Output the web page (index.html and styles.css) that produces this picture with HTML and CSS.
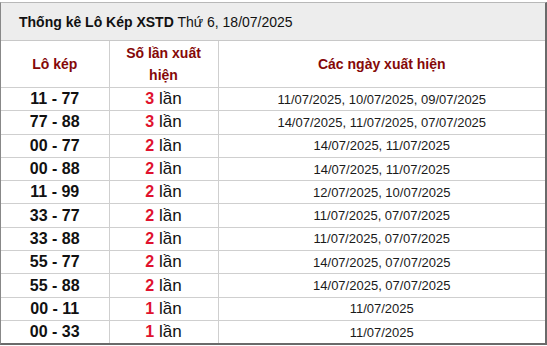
FILE: index.html
```html
<!DOCTYPE html>
<html lang="vi">
<head>
<meta charset="utf-8">
<link rel="stylesheet" href="styles.css">
</head>
<body>
<div class="box">
  <div class="title"><b>Thống kê Lô Kép XSTD</b> Thứ 6, 18/07/2025</div>
  <table class="tbl">
    <colgroup><col class="c1"><col class="c2"><col class="c3"></colgroup>
    <thead>
      <tr><th>Lô kép</th><th>Số lần xuất hiện</th><th>Các ngày xuất hiện</th></tr>
    </thead>
    <tbody>
      <tr><td class="pair">11 - 77</td><td class="cnt"><b>3</b> lần</td><td class="dates">11/07/2025, 10/07/2025, 09/07/2025</td></tr>
      <tr><td class="pair">77 - 88</td><td class="cnt"><b>3</b> lần</td><td class="dates">14/07/2025, 11/07/2025, 07/07/2025</td></tr>
      <tr><td class="pair">00 - 77</td><td class="cnt"><b>2</b> lần</td><td class="dates">14/07/2025, 11/07/2025</td></tr>
      <tr><td class="pair">00 - 88</td><td class="cnt"><b>2</b> lần</td><td class="dates">14/07/2025, 11/07/2025</td></tr>
      <tr><td class="pair">11 - 99</td><td class="cnt"><b>2</b> lần</td><td class="dates">12/07/2025, 10/07/2025</td></tr>
      <tr><td class="pair">33 - 77</td><td class="cnt"><b>2</b> lần</td><td class="dates">11/07/2025, 07/07/2025</td></tr>
      <tr><td class="pair">33 - 88</td><td class="cnt"><b>2</b> lần</td><td class="dates">11/07/2025, 07/07/2025</td></tr>
      <tr><td class="pair">55 - 77</td><td class="cnt"><b>2</b> lần</td><td class="dates">14/07/2025, 07/07/2025</td></tr>
      <tr><td class="pair">55 - 88</td><td class="cnt"><b>2</b> lần</td><td class="dates">14/07/2025, 07/07/2025</td></tr>
      <tr><td class="pair">00 - 11</td><td class="cnt"><b>1</b> lần</td><td class="dates">11/07/2025</td></tr>
      <tr><td class="pair">00 - 33</td><td class="cnt"><b>1</b> lần</td><td class="dates">11/07/2025</td></tr>
    </tbody>
  </table>
</div>
</body>
</html>
```
FILE: styles.css
```css
html, body {
  margin: 0;
  padding: 0;
  background: #ffffff;
}
body {
  font-family: "Liberation Sans", Arial, sans-serif;
  color: #111;
}
.box {
  margin-top: 2px;
  width: 544px;
  border-top: 1px solid #b8b8b8;
  border-left: 1px solid #888;
  border-right: 2px solid #6a6a6a;
  border-bottom: 2px solid #6a6a6a;
}
.title {
  height: 37px;
  background: #ededed;
  border-bottom: 1px solid #c8c8c8;
  display: flex;
  align-items: center;
  padding-left: 18px;
  font-size: 14px;
  color: #111;
  white-space: pre;
}
.title b {
  font-weight: bold;
}
.tbl {
  width: 100%;
  border-collapse: collapse;
  table-layout: fixed;
}
.c1 { width: 108px; }
.c2 { width: 109px; }
.tbl th, .tbl td {
  border: 1px solid #cfcfcf;
  text-align: center;
  padding: 0;
}
.tbl tr > :first-child { border-left: none; }
.tbl tr > :last-child { border-right: none; }
.tbl tbody tr:last-child td { border-bottom: none; }
.tbl thead tr:first-child th { border-top: none; }
.tbl th {
  height: 46px;
  color: #850808;
  font-size: 14px;
  font-weight: bold;
  line-height: 22px;
  padding: 0 16px;
}
.tbl td {
  height: 22.3px;
}
.pair {
  font-size: 16px;
  font-weight: bold;
}
.cnt {
  font-size: 17px;
}
.cnt b {
  color: #e0122e;
  font-size: 16px;
}
.dates {
  font-size: 13px;
  color: #1a1a1a;
}
```
